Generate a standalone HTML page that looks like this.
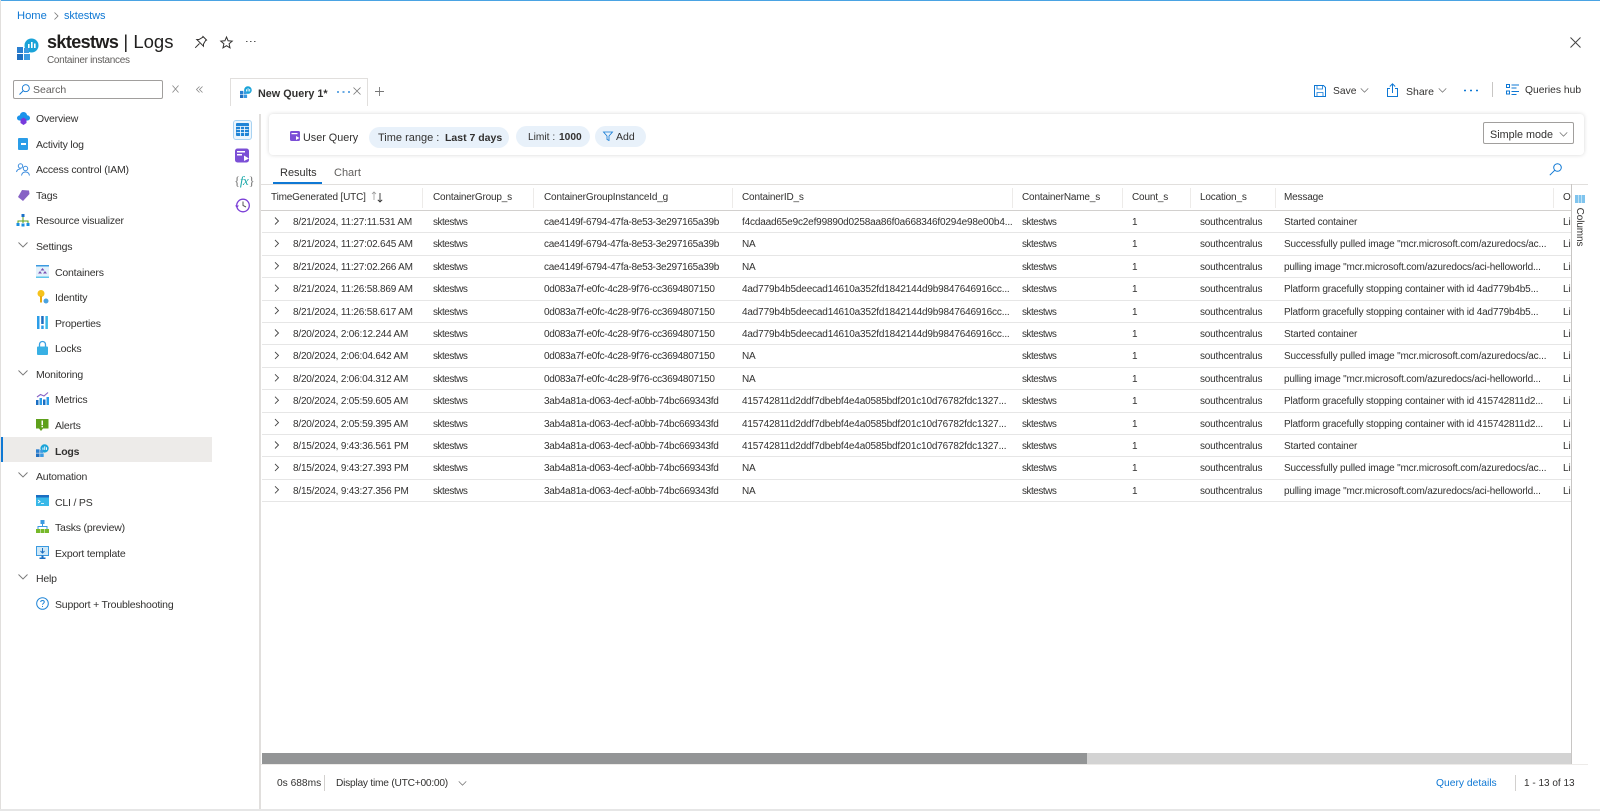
<!DOCTYPE html>
<html><head><meta charset="utf-8"><title>sktestws | Logs</title>
<style>
html,body{margin:0;padding:0;background:#fff}
body{width:1600px;height:811px;position:relative;overflow:hidden;font-family:"Liberation Sans",sans-serif;color:#323130;font-size:11px}
.a{position:absolute;white-space:nowrap}
.t{position:absolute;white-space:nowrap;line-height:14px;height:14px}
svg{position:absolute;overflow:visible}
.nav{position:absolute;white-space:nowrap;line-height:14px;font-size:10.5px;color:#323130;letter-spacing:-.2px;margin-top:1px}
.r{position:absolute;left:262px;width:1309px;height:22.4px;border-bottom:1px solid #e6e6e6;box-sizing:border-box}
.r span{position:absolute;top:5px;line-height:14px;white-space:nowrap;font-size:10px;color:#323130}
.c0{left:31px;letter-spacing:-.2px}.c1{left:171px;letter-spacing:-.5px}.c2{left:282px;letter-spacing:-.28px}.c3{left:480px;letter-spacing:-.17px}.c4{left:760px;letter-spacing:-.5px}.c5{left:870px}.c6{left:938px;letter-spacing:-.2px}.c7{left:1022px;letter-spacing:-.18px}.c8{left:1301px;width:8px;overflow:hidden}
.h{position:absolute;top:191px;line-height:14px;font-size:10px;letter-spacing:-.17px;color:#323130;white-space:nowrap}
.s{position:absolute;top:188px;width:1px;height:20px;background:#edebe9}
.pill{position:absolute;background:#e8f1fa;border-radius:11px;height:21px}
</style></head><body>
<svg width="0" height="0" style="position:absolute"><symbol id="logi" viewBox="0 0 22 22"><circle cx="14.5" cy="7.5" r="7" fill="#1aa3d8"/><rect x="11" y="6" width="1.6" height="4" fill="#fff"/><rect x="14" y="4" width="1.6" height="6" fill="#fff"/><rect x="17" y="5.5" width="1.6" height="4.5" fill="#fff"/><rect x="0" y="9" width="6" height="6" fill="#2a7fd0"/><rect x="7" y="10" width="5" height="5" fill="#3b9ae1"/><rect x="0" y="16" width="6" height="6" fill="#1f6fc0"/><rect x="7" y="16" width="6" height="6" fill="#3b9ae1"/></symbol><symbol id="chev" viewBox="0 0 10 6"><path d="M.5.5 5 5 9.500.5" fill="none" stroke="#777" stroke-width=".9"/></symbol></svg>

<div class="a" style="left:0;top:0;width:1600px;height:1px;background:#4aa3e3"></div>
<div class="a" style="left:0;top:0;width:1px;height:811px;background:#e1dfdd"></div>
<div class="a" style="left:0;top:809px;width:1600px;height:1.500px;background:#e6e6e6"></div>

<div class="t" style="left:17px;top:9px;font-size:11.2px;color:#0f78d4">Home</div>
<svg style="left:54px;top:12px" width="5" height="8"><path d="M.5.5 4 4 .5 7.500" fill="none" stroke="#777" stroke-width=".8"/></svg>
<div class="t" style="left:64px;top:9px;font-size:11px;color:#0f78d4;letter-spacing:-.1px">sktestws</div>

<svg style="left:17px;top:38px" width="22" height="22"><use href="#logi"/></svg>
<div class="t" style="left:47px;top:30px;font-size:18.5px;line-height:24px;height:24px;color:#201f1e"><span style="font-weight:700;font-size:18px;letter-spacing:-.6px">sktestws</span> | Logs</div>
<div class="t" style="left:47px;top:54px;font-size:10px;letter-spacing:-.3px;color:#605e5c">Container instances</div>
<svg style="left:194px;top:35px" width="14" height="14"><path d="M8.500 1 13 5.500M9.500 1.800 5 4.500 2.800 4.500 9.500 11.200 9.500 9 12.200 4.500M5.500 8.500 1.200 12.800" fill="none" stroke="#323130" stroke-width="1"/></svg>
<svg style="left:220px;top:36px" width="13" height="13"><path d="M6.500 1 8.100 4.800 12.200 5.100 9.100 7.800 10 11.800 6.500 9.700 3 11.800 3.900 7.800 .8 5.100 4.900 4.800Z" fill="none" stroke="#323130" stroke-width="1"/></svg>
<svg style="left:246px;top:41px" width="10" height="2"><path d="M0 .5H1.500M4 .5H5.500M8 .5H9.500" stroke="#555" stroke-width="1"/></svg>
<svg style="left:1570px;top:37px" width="11" height="11"><path d="M.5.5 10.500 10.500M10.500.5 .5 10.500" stroke="#444" stroke-width="1"/></svg>

<div class="a" style="left:13px;top:80px;width:150px;height:19px;border:1px solid #a19f9d;border-radius:2px;box-sizing:border-box"></div>
<svg style="left:19px;top:84px" width="11" height="11"><circle cx="6.800" cy="4.200" r="3.500" fill="none" stroke="#0f78d4" stroke-width=".9"/><path d="M4.200 6.800.5 10.500" stroke="#0f78d4" stroke-width="1"/></svg>
<div class="t" style="left:33px;top:83px;font-size:10.500px;color:#605e5c">Search</div>
<svg style="left:172px;top:85px" width="7" height="8"><path d="M.5.500 6.500 7.500M6.500.5 .5 7.500" stroke="#888" stroke-width=".8"/></svg>
<svg style="left:196px;top:86px" width="7" height="7"><path d="M3.500.5.500 3.500 3.500 6.500M6.500.5 3.500 3.500 6.500 6.500" fill="none" stroke="#888" stroke-width=".8"/></svg>

<!-- nav icons -->
<svg style="left:17px;top:112px" width="13" height="13"><path d="M6.500 0C8.500 0 10 1.500 10 3.200 11.800 3.200 13 4.500 13 6 13 7.500 11.800 8.500 10 8.500H3C1.200 8.500 0 7.500 0 6 0 4.500 1.200 3.500 3 3.200 3 1.500 4.500 0 6.500 0Z" fill="#1b93eb"/><path d="M3.500 7.500 6.500 5.500 9.500 7.500V11L6.500 13 3.500 11Z" fill="#773adc"/></svg>
<div class="a" style="left:18px;top:138px;width:10px;height:12px;background:#2b9de8;border-radius:1px"></div><div class="a" style="left:21px;top:143px;width:5px;height:1.500px;background:#fff"></div>
<svg style="left:16px;top:163px" width="14" height="13"><circle cx="4.500" cy="3" r="2.200" fill="none" stroke="#3e8ede"/><circle cx="9.500" cy="5.500" r="2.200" fill="none" stroke="#3e8ede"/><path d="M.5 9C1 6.500 3 6 4.500 6M5.500 12.500C6 9.500 8 9 9.500 9 11 9 13 9.500 13.500 12.500" fill="none" stroke="#3e8ede"/></svg>
<svg style="left:17px;top:189px" width="13" height="13"><path d="M5 1 12 1.500 12.500 5 6 12 1 8Z" fill="#8661c5"/></svg>
<svg style="left:16px;top:214px" width="14" height="13"><path d="M7 3V7M2 9V7H12V9M7 7V9" stroke="#5ea01c" fill="none"/><rect x="5.500" y="0" width="3" height="3" fill="#1a6fc9"/><rect x="0.500" y="9" width="3" height="3" fill="#1a8fe0"/><rect x="5.500" y="9.500" width="3" height="3" fill="#1a8fe0"/><rect x="10.500" y="9" width="3" height="3" fill="#1a8fe0"/></svg>
<svg style="left:18px;top:242px" width="10" height="6"><use href="#chev"/></svg>
<svg style="left:18px;top:370px" width="10" height="6"><use href="#chev"/></svg>
<svg style="left:18px;top:472px" width="10" height="6"><use href="#chev"/></svg>
<svg style="left:18px;top:574px" width="10" height="6"><use href="#chev"/></svg>
<svg style="left:36px;top:265px" width="13" height="13"><rect x="0" y="0" width="13" height="13" fill="#e3f2fb"/><rect x="0" y="0" width="13" height="1.500" fill="#3b9ae1"/><rect x="0" y="11.500" width="13" height="1.500" fill="#5fc4ea"/><path d="M6.500 3 8.500 5.500H4.500ZM4 6 6 8.500H2ZM9 6 11 8.500H7Z" fill="#7a52b3"/></svg>
<svg style="left:37px;top:290px" width="12" height="14"><circle cx="4" cy="3.500" r="3.500" fill="#f6c21c"/><rect x="3" y="6" width="2" height="6.500" fill="#e8a910"/><circle cx="9" cy="11" r="2.500" fill="#4aa3df"/></svg>
<svg style="left:37px;top:316px" width="11" height="13"><rect x="0" y="0" width="2.500" height="13" fill="#2b9de8"/><rect x="4.200" y="0" width="2.500" height="8" fill="#1b6ec2"/><rect x="4.200" y="9.500" width="2.500" height="3.500" fill="#2b9de8"/><rect x="8.400" y="0" width="2.500" height="13" fill="#38b8e8"/></svg>
<svg style="left:37px;top:341px" width="11" height="14"><path d="M2.500 6V3.500C2.500-.5 8.500-.5 8.500 3.500V6" fill="none" stroke="#3aa0e2" stroke-width="1.300"/><rect x="0" y="5.500" width="11" height="8.500" rx="1" fill="#38b0e4"/></svg>
<svg style="left:36px;top:392px" width="13" height="13"><rect x="0" y="8" width="2.500" height="5" fill="#1b6ec2"/><rect x="3.500" y="6" width="2.500" height="7" fill="#2b9de8"/><rect x="7" y="7.500" width="2.500" height="5.500" fill="#1b6ec2"/><rect x="10.500" y="5" width="2.500" height="8" fill="#2b9de8"/><path d="M1 5 4.500 2.500 8 4 12 .5" fill="none" stroke="#8661c5" stroke-width="1.100"/></svg>
<svg style="left:36px;top:419px" width="13" height="12"><rect x="0" y="0" width="12.500" height="9.500" fill="#5ea01c"/><path d="M3 9.500H7L5 12Z" fill="#5ea01c"/><rect x="5.500" y="1.500" width="1.500" height="4.500" fill="#fff"/><rect x="5.500" y="6.800" width="1.500" height="1.500" fill="#fff"/></svg>

<div class="a" style="left:2px;top:437px;width:210px;height:25px;background:#edebe9"></div>
<div class="a" style="left:1px;top:437px;width:1.500px;height:25px;background:#0f78d4"></div>
<svg style="left:36px;top:444px" width="13" height="13"><use href="#logi"/></svg>

<svg style="left:36px;top:495px" width="13" height="11"><rect width="13" height="11" fill="#38b8e8"/><rect width="13" height="2.500" fill="#1b6ec2"/><path d="M2 5 4 6.500 2 8M5 8.500H8" fill="none" stroke="#fff" stroke-width=".8"/></svg>
<svg style="left:36px;top:520px" width="13" height="13"><rect x="4.500" y="0" width="4" height="4" fill="#3b9ae1"/><path d="M6.500 4V6.500M2 9V6.500H11V9" fill="none" stroke="#3b9ae1"/><rect x="0" y="9" width="4" height="4" fill="#76b82a"/><rect x="4.500" y="9" width="4" height="4" fill="#76b82a"/><rect x="9" y="9" width="4" height="4" fill="#76b82a"/></svg>
<svg style="left:36px;top:546px" width="13" height="13"><rect x="0.500" y="0.500" width="12" height="9" fill="#cfe8f7" stroke="#3b9ae1"/><path d="M6.500 2V7M4.500 5 6.500 7 8.500 5" fill="none" stroke="#1b6ec2"/><rect x="5.500" y="9.500" width="2" height="2" fill="#1b6ec2"/><rect x="3.500" y="11.500" width="6" height="1.500" fill="#1b6ec2"/></svg>
<svg style="left:36px;top:597px" width="13" height="13"><circle cx="6.500" cy="6.500" r="5.800" fill="none" stroke="#1f84d6" stroke-width="1"/><path d="M4.700 5C4.800 3 8.300 3 8.300 5 8.300 6.200 6.500 6.300 6.500 7.800M6.500 9V10" fill="none" stroke="#1f84d6"/></svg>

<div class="nav" style="left:36px;top:111px">Overview</div>
<div class="nav" style="left:36px;top:137px">Activity log</div>
<div class="nav" style="left:36px;top:162px">Access control (IAM)</div>
<div class="nav" style="left:36px;top:188px">Tags</div>
<div class="nav" style="left:36px;top:213px">Resource visualizer</div>
<div class="nav" style="left:36px;top:239px">Settings</div>
<div class="nav" style="left:55px;top:265px">Containers</div>
<div class="nav" style="left:55px;top:290px">Identity</div>
<div class="nav" style="left:55px;top:316px">Properties</div>
<div class="nav" style="left:55px;top:341px">Locks</div>
<div class="nav" style="left:36px;top:367px">Monitoring</div>
<div class="nav" style="left:55px;top:392px">Metrics</div>
<div class="nav" style="left:55px;top:418px">Alerts</div>
<div class="nav" style="left:55px;top:444px;font-weight:700">Logs</div>
<div class="nav" style="left:36px;top:469px">Automation</div>
<div class="nav" style="left:55px;top:495px">CLI / PS</div>
<div class="nav" style="left:55px;top:520px">Tasks (preview)</div>
<div class="nav" style="left:55px;top:546px">Export template</div>
<div class="nav" style="left:36px;top:571px">Help</div>
<div class="nav" style="left:55px;top:597px">Support + Troubleshooting</div>

<!-- query tab -->
<div class="a" style="left:230px;top:78px;width:138px;height:28px;border:1px solid #e1dfdd;border-bottom:0;box-sizing:border-box"></div>
<svg style="left:240px;top:86px" width="12" height="12"><use href="#logi"/></svg>
<div class="t" style="left:258px;top:87px;font-size:10.800px;font-weight:700;color:#323130">New Query 1*</div>
<svg style="left:337px;top:91px" width="14" height="2"><path d="M0 1H2M5.500 1H7.500M11 1H13" stroke="#0f78d4" stroke-width="1.300"/></svg>
<svg style="left:353px;top:87px" width="8" height="8"><path d="M.5.5 7.500 7.500M7.500.5 .5 7.500" stroke="#777" stroke-width=".8"/></svg>
<svg style="left:375px;top:87px" width="9" height="9"><path d="M4.500 0V9M0 4.500H9" stroke="#777" stroke-width=".9"/></svg>

<!-- right toolbar -->
<svg style="left:1314px;top:85px" width="12" height="12"><path d="M.5.5H9.500L11.500 2.500V11.500H.5Z" fill="none" stroke="#0f78d4"/><path d="M3 .5V4H8.500V.5M3 11.500V7.500H9V11.500" fill="none" stroke="#0f78d4" stroke-width=".8"/></svg>
<div class="t" style="left:1333px;top:85px;font-size:10.300px">Save</div>
<svg style="left:1360px;top:88px" width="9" height="5" viewBox="0 0 10 6"><use href="#chev"/></svg>
<svg style="left:1387px;top:83px" width="11" height="14"><path d="M3 5.500H.5V13.500H10.500V5.500H8" fill="none" stroke="#0f78d4"/><path d="M5.500 10V1M2.800 3.500 5.500.8 8.200 3.500" fill="none" stroke="#0f78d4"/></svg>
<div class="t" style="left:1406px;top:85px;font-size:10.500px">Share</div>
<svg style="left:1438px;top:88px" width="9" height="5" viewBox="0 0 10 6"><use href="#chev"/></svg>
<svg style="left:1464px;top:89px" width="15" height="3"><path d="M0 1.500H2M6 1.500H8M12 1.500H14" stroke="#0f78d4" stroke-width="1.400"/></svg>
<div class="a" style="left:1492px;top:82px;width:1px;height:15px;background:#c8c6c4"></div>
<svg style="left:1506px;top:84px" width="13" height="11"><rect x=".5" y=".5" width="3" height="3" fill="none" stroke="#0f78d4"/><rect x=".5" y="7" width="3" height="3" fill="none" stroke="#0f78d4"/><path d="M5.500 1H13M5.500 4H10.500M5.500 7.500H13M5.500 10.500H10.500" stroke="#0f78d4" stroke-width=".9"/></svg>
<div class="t" style="left:1525px;top:84px;font-size:10.300px">Queries hub</div>

<!-- side rail -->
<div class="a" style="left:259px;top:114px;width:2px;height:695px;background:#e1dfdd"></div>
<div class="a" style="left:233px;top:120px;width:19px;height:20px;border:1px solid #a9d3f2;border-radius:3px;box-sizing:border-box;background:#eef6fc"></div>
<svg style="left:236px;top:123px" width="13" height="13"><rect width="13" height="13" rx="1" fill="#1f84d6"/><path d="M0 3.500H13M.5 6.500H12.500M.5 9.500H12.500M4.500 3.500V13M8.500 3.500V13" stroke="#fff" stroke-width=".8"/></svg>
<svg style="left:235px;top:148px" width="15" height="15"><rect y=".5" width="14" height="14" rx="2.500" fill="#7b4fd6"/><rect x="2" y="3" width="8" height="1.500" fill="#fff"/><rect x="2" y="6" width="5" height="1.500" fill="#fff"/><path d="M9 7.500 14 10.500 9 13Z" fill="#fff"/></svg>
<div class="t" style="left:234px;top:173px;font-family:'Liberation Serif',serif;font-size:13px;line-height:16px;height:16px;color:#777;letter-spacing:-.4px">{<i style="color:#1ba8a8">fx</i>}</div>
<svg style="left:235px;top:198px" width="15" height="15"><circle cx="8" cy="7.500" r="6.300" fill="none" stroke="#7b3fd6" stroke-width="1.300"/><path d="M8 3.500V7.500L11 9" fill="none" stroke="#555" stroke-width="1"/><path d="M0 7.500H4L2 10Z" fill="#7b3fd6"/></svg>

<!-- query card -->
<div class="a" style="left:269px;top:114px;width:1315px;height:41px;border-radius:4px;background:#fff;box-shadow:0 0 4px rgba(0,0,0,.16)"></div>
<svg style="left:290px;top:131px" width="10" height="10"><rect width="10" height="10" rx="1.500" fill="#7b4fd6"/><rect x="1.500" y="2" width="6" height="1.200" fill="#fff"/><path d="M6 5 9.500 7 6 9Z" fill="#fff"/></svg>
<div class="t" style="left:303px;top:131px;font-size:10.800px;color:#323130">User Query</div>
<div class="pill" style="left:369px;top:126.500px;width:140px"></div>
<div class="t" style="left:378px;top:131px;font-size:11px;color:#323130">Time range :</div>
<div class="t" style="left:445px;top:131px;font-size:10.500px;font-weight:700;color:#323130">Last 7 days</div>
<div class="pill" style="left:516px;top:126px;width:74px"></div>
<div class="t" style="left:528px;top:130.500px;font-size:10.200px;color:#323130">Limit :</div>
<div class="t" style="left:559px;top:130.500px;font-size:10.200px;font-weight:700;color:#323130">1000</div>
<div class="pill" style="left:595px;top:126px;width:51px"></div>
<svg style="left:603px;top:131px" width="10" height="10"><path d="M.5 1H9.500L6 5V9.500L4 8.500V5Z" fill="none" stroke="#0f78d4" stroke-width=".8"/></svg>
<div class="t" style="left:616px;top:129.500px;font-size:10.500px;color:#323130">Add</div>
<div class="a" style="left:1483px;top:122px;width:91px;height:22px;border:1px solid #a19f9d;border-radius:2px;box-sizing:border-box"></div>
<div class="t" style="left:1490px;top:128px;font-size:10.800px">Simple mode</div>
<svg style="left:1559px;top:132px" width="9" height="5" viewBox="0 0 10 6"><use href="#chev"/></svg>

<!-- results tabs -->
<div class="t" style="left:280px;top:165.500px;font-size:11px;color:#323130">Results</div>
<div class="t" style="left:334px;top:165.500px;font-size:11px;color:#605e5c">Chart</div>
<div class="a" style="left:273px;top:182px;width:49px;height:1.500px;background:#0f78d4"></div>
<svg style="left:1549px;top:163px" width="13" height="13"><circle cx="8.500" cy="4.500" r="3.800" fill="none" stroke="#0f78d4"/><path d="M5.700 7.300 .8 12.200" stroke="#0f78d4"/></svg>

<!-- grid header -->
<div class="a" style="left:261px;top:184px;width:1327px;height:1px;background:#e1dfdd"></div>
<div class="a" style="left:261px;top:210px;width:1310px;height:1px;background:#d2d0ce"></div>
<div class="h" style="left:271px">TimeGenerated [UTC]</div>
<svg style="left:371px;top:191px" width="13" height="12"><path d="M3 9V1M1 3 3 1 5 3" fill="none" stroke="#999" stroke-width=".8"/><path d="M9 2V11M6.800 8.800 9 11 11.200 8.800" fill="none" stroke="#333" stroke-width=".9"/></svg>
<div class="s" style="left:422px"></div><div class="h" style="left:433px">ContainerGroup_s</div>
<div class="s" style="left:533px"></div><div class="h" style="left:544px">ContainerGroupInstanceId_g</div>
<div class="s" style="left:732px"></div><div class="h" style="left:742px">ContainerID_s</div>
<div class="s" style="left:1012px"></div><div class="h" style="left:1022px">ContainerName_s</div>
<div class="s" style="left:1122px"></div><div class="h" style="left:1132px">Count_s</div>
<div class="s" style="left:1190px"></div><div class="h" style="left:1200px">Location_s</div>
<div class="s" style="left:1275px"></div><div class="h" style="left:1284px">Message</div>
<div class="s" style="left:1553px"></div><div class="h" style="left:1563px;width:8px;overflow:hidden">O</div>

<!-- rows -->
<div class="r" style="top:211px"><span class="c0">8/21/2024, 11:27:11.531 AM</span><span class="c1">sktestws</span><span class="c2">cae4149f-6794-47fa-8e53-3e297165a39b</span><span class="c3">f4cdaad65e9c2ef99890d0258aa86f0a668346f0294e98e00b4...</span><span class="c4">sktestws</span><span class="c5">1</span><span class="c6">southcentralus</span><span class="c7">Started container</span><span class="c8">Lin</span></div>
<div class="r" style="top:233.400px"><span class="c0">8/21/2024, 11:27:02.645 AM</span><span class="c1">sktestws</span><span class="c2">cae4149f-6794-47fa-8e53-3e297165a39b</span><span class="c3">NA</span><span class="c4">sktestws</span><span class="c5">1</span><span class="c6">southcentralus</span><span class="c7">Successfully pulled image "mcr.microsoft.com/azuredocs/ac...</span><span class="c8">Lin</span></div>
<div class="r" style="top:255.800px"><span class="c0">8/21/2024, 11:27:02.266 AM</span><span class="c1">sktestws</span><span class="c2">cae4149f-6794-47fa-8e53-3e297165a39b</span><span class="c3">NA</span><span class="c4">sktestws</span><span class="c5">1</span><span class="c6">southcentralus</span><span class="c7">pulling image "mcr.microsoft.com/azuredocs/aci-helloworld...</span><span class="c8">Lin</span></div>
<div class="r" style="top:278.200px"><span class="c0">8/21/2024, 11:26:58.869 AM</span><span class="c1">sktestws</span><span class="c2">0d083a7f-e0fc-4c28-9f76-cc3694807150</span><span class="c3">4ad779b4b5deecad14610a352fd1842144d9b9847646916cc...</span><span class="c4">sktestws</span><span class="c5">1</span><span class="c6">southcentralus</span><span class="c7">Platform gracefully stopping container with id 4ad779b4b5...</span><span class="c8">Lin</span></div>
<div class="r" style="top:300.600px"><span class="c0">8/21/2024, 11:26:58.617 AM</span><span class="c1">sktestws</span><span class="c2">0d083a7f-e0fc-4c28-9f76-cc3694807150</span><span class="c3">4ad779b4b5deecad14610a352fd1842144d9b9847646916cc...</span><span class="c4">sktestws</span><span class="c5">1</span><span class="c6">southcentralus</span><span class="c7">Platform gracefully stopping container with id 4ad779b4b5...</span><span class="c8">Lin</span></div>
<div class="r" style="top:323px"><span class="c0">8/20/2024, 2:06:12.244 AM</span><span class="c1">sktestws</span><span class="c2">0d083a7f-e0fc-4c28-9f76-cc3694807150</span><span class="c3">4ad779b4b5deecad14610a352fd1842144d9b9847646916cc...</span><span class="c4">sktestws</span><span class="c5">1</span><span class="c6">southcentralus</span><span class="c7">Started container</span><span class="c8">Lin</span></div>
<div class="r" style="top:345.400px"><span class="c0">8/20/2024, 2:06:04.642 AM</span><span class="c1">sktestws</span><span class="c2">0d083a7f-e0fc-4c28-9f76-cc3694807150</span><span class="c3">NA</span><span class="c4">sktestws</span><span class="c5">1</span><span class="c6">southcentralus</span><span class="c7">Successfully pulled image "mcr.microsoft.com/azuredocs/ac...</span><span class="c8">Lin</span></div>
<div class="r" style="top:367.800px"><span class="c0">8/20/2024, 2:06:04.312 AM</span><span class="c1">sktestws</span><span class="c2">0d083a7f-e0fc-4c28-9f76-cc3694807150</span><span class="c3">NA</span><span class="c4">sktestws</span><span class="c5">1</span><span class="c6">southcentralus</span><span class="c7">pulling image "mcr.microsoft.com/azuredocs/aci-helloworld...</span><span class="c8">Lin</span></div>
<div class="r" style="top:390.200px"><span class="c0">8/20/2024, 2:05:59.605 AM</span><span class="c1">sktestws</span><span class="c2">3ab4a81a-d063-4ecf-a0bb-74bc669343fd</span><span class="c3">415742811d2ddf7dbebf4e4a0585bdf201c10d76782fdc1327...</span><span class="c4">sktestws</span><span class="c5">1</span><span class="c6">southcentralus</span><span class="c7">Platform gracefully stopping container with id 415742811d2...</span><span class="c8">Lin</span></div>
<div class="r" style="top:412.600px"><span class="c0">8/20/2024, 2:05:59.395 AM</span><span class="c1">sktestws</span><span class="c2">3ab4a81a-d063-4ecf-a0bb-74bc669343fd</span><span class="c3">415742811d2ddf7dbebf4e4a0585bdf201c10d76782fdc1327...</span><span class="c4">sktestws</span><span class="c5">1</span><span class="c6">southcentralus</span><span class="c7">Platform gracefully stopping container with id 415742811d2...</span><span class="c8">Lin</span></div>
<div class="r" style="top:435px"><span class="c0">8/15/2024, 9:43:36.561 PM</span><span class="c1">sktestws</span><span class="c2">3ab4a81a-d063-4ecf-a0bb-74bc669343fd</span><span class="c3">415742811d2ddf7dbebf4e4a0585bdf201c10d76782fdc1327...</span><span class="c4">sktestws</span><span class="c5">1</span><span class="c6">southcentralus</span><span class="c7">Started container</span><span class="c8">Lin</span></div>
<div class="r" style="top:457.400px"><span class="c0">8/15/2024, 9:43:27.393 PM</span><span class="c1">sktestws</span><span class="c2">3ab4a81a-d063-4ecf-a0bb-74bc669343fd</span><span class="c3">NA</span><span class="c4">sktestws</span><span class="c5">1</span><span class="c6">southcentralus</span><span class="c7">Successfully pulled image "mcr.microsoft.com/azuredocs/ac...</span><span class="c8">Lin</span></div>
<div class="r" style="top:479.800px"><span class="c0">8/15/2024, 9:43:27.356 PM</span><span class="c1">sktestws</span><span class="c2">3ab4a81a-d063-4ecf-a0bb-74bc669343fd</span><span class="c3">NA</span><span class="c4">sktestws</span><span class="c5">1</span><span class="c6">southcentralus</span><span class="c7">pulling image "mcr.microsoft.com/azuredocs/aci-helloworld...</span><span class="c8">Lin</span></div>

<svg style="left:274px;top:217px" width="6" height="280"><g fill="none" stroke="#444" stroke-width=".9"><path d="M1 .5 4.500 4 1 7.500"/><path d="M1 22.900 4.500 26.400 1 29.900"/><path d="M1 45.300 4.500 48.800 1 52.300"/><path d="M1 67.700 4.500 71.200 1 74.700"/><path d="M1 90.100 4.500 93.600 1 97.100"/><path d="M1 112.500 4.500 116 1 119.500"/><path d="M1 134.900 4.500 138.400 1 141.900"/><path d="M1 157.300 4.500 160.800 1 164.300"/><path d="M1 179.700 4.500 183.200 1 186.700"/><path d="M1 202.100 4.500 205.600 1 209.100"/><path d="M1 224.500 4.500 228 1 231.500"/><path d="M1 246.900 4.500 250.400 1 253.900"/><path d="M1 269.300 4.500 272.800 1 276.300"/></g></svg>

<!-- columns rail -->
<div class="a" style="left:1571px;top:184px;width:1px;height:580px;background:#c8c6c4"></div>
<svg style="left:1575px;top:195px" width="10" height="8"><rect width="3" height="8" fill="#7fc4ee"/><rect x="3.500" width="3" height="8" fill="#7fc4ee"/><rect x="7" width="3" height="8" fill="#7fc4ee"/></svg>
<div class="t" style="left:1559px;top:220px;width:40px;text-align:center;font-size:10px;letter-spacing:-.1px;transform:rotate(90deg)">Columns</div>

<!-- scrollbar -->
<div class="a" style="left:262px;top:753px;width:1309px;height:11px;background:#d3d3d3"></div>
<div class="a" style="left:262px;top:753px;width:825px;height:11px;background:#939596"></div>
<div class="a" style="left:261px;top:764px;width:1327px;height:1px;background:#edebe9"></div>

<!-- footer -->
<div class="t" style="left:277px;top:777px;font-size:10.200px">0s 688ms</div>
<div class="a" style="left:324px;top:775px;width:1px;height:16px;background:#d2d0ce"></div>
<div class="t" style="left:336px;top:777px;font-size:10.200px;letter-spacing:-.23px">Display time (UTC+00:00)</div>
<svg style="left:458px;top:781px" width="9" height="5" viewBox="0 0 10 6"><use href="#chev"/></svg>
<div class="t" style="left:1436px;top:777px;font-size:10.300px;color:#0f78d4">Query details</div>
<div class="a" style="left:1515px;top:775px;width:1px;height:16px;background:#d2d0ce"></div>
<div class="t" style="left:1524px;top:777px;font-size:10px">1 - 13 of 13</div>
</body></html>
